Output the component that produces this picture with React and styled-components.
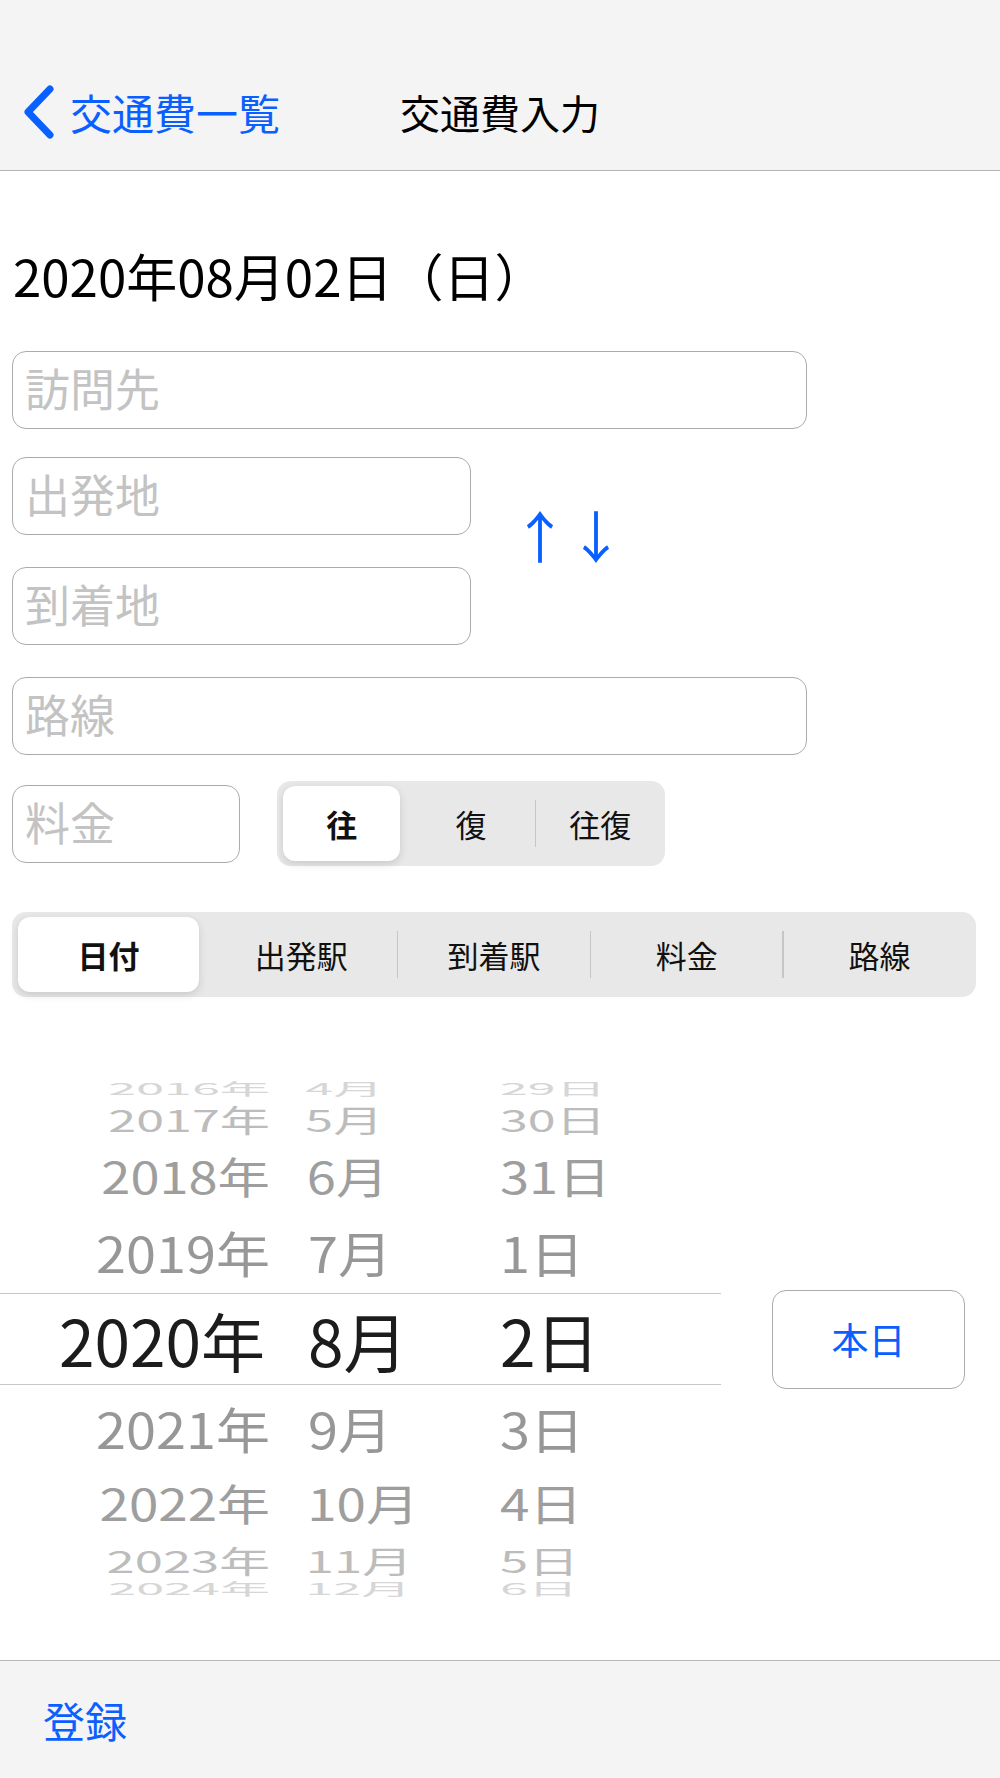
import React from 'react'
import styled, { createGlobalStyle } from 'styled-components'

const BLUE = '#0a60fe'

const GlobalStyle = createGlobalStyle`
  html, body {
    margin: 0;
    padding: 0;
    background: #fff;
  }
  body {
    font-family: "Noto Sans CJK JP", "Noto Sans", sans-serif;
    color: #000;
  }
  * {
    box-sizing: border-box;
  }
`

const Screen = styled.div`
  width: 1000px;
  min-height: 1778px;
  display: flex;
  flex-direction: column;
  background: #fff;
`

const NavBar = styled.header`
  height: 171px;
  padding-top: 54px;
  background: #f4f4f4;
  border-bottom: 1px solid #b4b4b4;
  display: grid;
  grid-template-columns: 1fr auto 1fr;
  align-items: center;
`

const BackButton = styled.a`
  display: flex;
  align-items: center;
  gap: 15px;
  padding-left: 23px;
  color: ${BLUE};
  font-size: 42px;
  text-decoration: none;
  line-height: 1;
`

const NavTitle = styled.h1`
  margin: 0;
  font-size: 40px;
  font-weight: 400;
  line-height: 1;
`

const Main = styled.main`
  flex: 1;
  display: flex;
  flex-direction: column;
`

const FormArea = styled.section`
  padding: 0 12px;
  display: flex;
  flex-direction: column;
`

const DateLabel = styled.div`
  margin-top: 75px;
  padding-left: 1px;
  font-size: 51px;
  line-height: 58px;
`

const Fields = styled.div`
  margin-top: 47px;
  display: flex;
  flex-direction: column;
  gap: 32px;
`

const TextField = styled.input`
  width: ${(p) => p.$width}px;
  height: 78px;
  padding: 0 12px 5px;
  border: 1.5px solid #ababab;
  border-radius: 14px;
  background: #fff;
  font-family: inherit;
  font-size: 45px;
  color: #000;
  outline: none;
  &::placeholder {
    color: #c3c3c3;
  }
`

const RouteRow = styled.div`
  margin-top: -4px;
  display: flex;
  align-items: center;
`

const RouteStack = styled.div`
  display: flex;
  flex-direction: column;
  gap: 32px;
`

const SwapButton = styled.button`
  margin: 0 0 34px 41px;
  padding: 0;
  border: none;
  background: none;
  color: ${BLUE};
  font-family: inherit;
  font-size: 56px;
  line-height: 1;
`

const FareRow = styled.div`
  margin-top: -6px;
  display: flex;
  align-items: center;
  gap: 37px;
`

const Segmented = styled.div`
  width: ${(p) => p.$width}px;
  height: 85px;
  margin-top: ${(p) => p.$top || 0}px;
  background: #e8e8e8;
  border-radius: 14px;
  display: flex;
  align-items: center;
`

const Segment = styled.div`
  flex: 1;
  height: 100%;
  padding: 5px 6px;
  display: flex;
`

const SegLabel = styled.span`
  flex: 1;
  display: flex;
  align-items: center;
  justify-content: center;
  font-size: 31px;
  color: #111;
  border-radius: 12px;
  font-weight: ${(p) => (p.$active ? 700 : 400)};
  background: ${(p) => (p.$active ? '#fff' : 'transparent')};
  box-shadow: ${(p) =>
    p.$active ? '0 3px 8px rgba(0,0,0,0.13), 0 0 1px rgba(0,0,0,0.06)' : 'none'};
`

const SegDivider = styled.span`
  width: 1.5px;
  height: 47px;
  margin: 0 -0.75px;
  flex: none;
  background: ${(p) => (p.$hidden ? 'transparent' : '#c6c6c6')};
`

const PickerArea = styled.div`
  margin-top: 82px;
  display: flex;
  align-items: center;
`

const Picker = styled.div`
  width: 721px;
  display: flex;
  flex-direction: column;
`

const PickerRow = styled.div`
  height: ${(p) => p.$h}px;
  display: grid;
  grid-template-columns: 270px 230px 1fr;
  color: ${(p) => p.$color};
  font-size: ${(p) => p.$size}px;
  line-height: ${(p) => p.$h - (p.$selected ? 2 : 0)}px;
  border-top: ${(p) => (p.$selected ? '1px solid #c8c8c8' : 'none')};
  border-bottom: ${(p) => (p.$selected ? '1px solid #c8c8c8' : 'none')};
`

const PickerCell = styled.span`
  display: block;
  white-space: nowrap;
  text-align: ${(p) => (p.$right ? 'right' : 'left')};
  padding-left: ${(p) => p.$pl || 0}px;
  padding-right: ${(p) => p.$pr || 0}px;
  transform-origin: ${(p) => (p.$right ? 'right center' : 'left center')};
  transform: scale(${(p) => p.$sx}, ${(p) => p.$sy});
`

const TodayButton = styled.button`
  margin: 8px 0 0 51px;
  width: 193px;
  height: 99px;
  border: 1.5px solid #ababab;
  border-radius: 14px;
  background: #fff;
  color: ${BLUE};
  font-family: inherit;
  font-size: 37px;
`

const Toolbar = styled.footer`
  height: 118px;
  border-top: 1px solid #b8b8b8;
  background: #f4f4f4;
  display: flex;
  align-items: center;
  padding-left: 43px;
  color: ${BLUE};
  font-size: 42px;
`

const Chevron = () => (
  <svg width="32" height="54" viewBox="0 0 32 54">
    <path
      d="M27 4 L5 27 L27 50"
      fill="none"
      stroke={BLUE}
      strokeWidth="7"
      strokeLinecap="round"
      strokeLinejoin="round"
    />
  </svg>
)

const wheel = [
  { y: '2016年', m: '4月', d: '29日', h: 18, sy: 0.3, sx: 0.93, color: '#d6d6d6' },
  { y: '2017年', m: '5月', d: '30日', h: 44, sy: 0.56, sx: 0.93, color: '#bcbcbc' },
  { y: '2018年', m: '6月', d: '31日', h: 70, sy: 0.8, sx: 0.97, color: '#9e9e9e' },
  { y: '2019年', m: '7月', d: '1日', h: 82, sy: 0.9, sx: 1, color: '#979797' },
  { y: '2020年', m: '8月', d: '2日', h: 92, sy: 1, sx: 1, color: '#1c1c1c', selected: true },
  { y: '2021年', m: '9月', d: '3日', h: 86, sy: 0.9, sx: 1, color: '#979797' },
  { y: '2022年', m: '10月', d: '4日', h: 64, sy: 0.8, sx: 0.98, color: '#9e9e9e' },
  { y: '2023年', m: '11月', d: '5日', h: 50, sy: 0.56, sx: 0.94, color: '#bcbcbc' },
  { y: '2024年', m: '12月', d: '6日', h: 6, sy: 0.3, sx: 0.93, color: '#d6d6d6' },
]

const directions = ['往', '復', '往復']
const sortKeys = ['日付', '出発駅', '到着駅', '料金', '路線']

const SegmentGroup = ({ items, active, width, top }) => (
  <Segmented $width={width} $top={top}>
    {items.map((label, i) => (
      <React.Fragment key={label}>
        {i > 0 && <SegDivider $hidden={i === active || i - 1 === active} />}
        <Segment>
          <SegLabel $active={i === active}>{label}</SegLabel>
        </Segment>
      </React.Fragment>
    ))}
  </Segmented>
)

export default function App() {
  return (
    <Screen>
      <GlobalStyle />
      <NavBar>
        <BackButton href="#">
          <Chevron />
          交通費一覧
        </BackButton>
        <NavTitle>交通費入力</NavTitle>
        <div />
      </NavBar>

      <Main>
        <FormArea>
          <DateLabel>2020年08月02日（日）</DateLabel>
          <Fields>
            <TextField $width={795} placeholder="訪問先" />
            <RouteRow>
              <RouteStack>
                <TextField $width={459} placeholder="出発地" />
                <TextField $width={459} placeholder="到着地" />
              </RouteStack>
              <SwapButton>↑↓</SwapButton>
            </RouteRow>
            <TextField $width={795} placeholder="路線" />
            <FareRow>
              <TextField $width={228} placeholder="料金" />
              <SegmentGroup items={directions} active={0} width={388} />
            </FareRow>
          </Fields>
          <SegmentGroup items={sortKeys} active={0} width={964} top={46} />
        </FormArea>

        <PickerArea>
          <Picker>
            {wheel.map((r) => (
              <PickerRow
                key={r.y}
                $h={r.h}
                $color={r.color}
                $size={r.selected ? 64 : 54}
                $selected={r.selected}
              >
                <PickerCell $right $pr={r.selected ? 5 : 0} $sx={r.sx} $sy={r.sy}>
                  {r.y}
                </PickerCell>
                <PickerCell $pl={38} $sx={r.sx} $sy={r.sy}>{r.m}</PickerCell>
                <PickerCell $sx={r.sx} $sy={r.sy}>{r.d}</PickerCell>
              </PickerRow>
            ))}
          </Picker>
          <TodayButton>本日</TodayButton>
        </PickerArea>
      </Main>

      <Toolbar>登録</Toolbar>
    </Screen>
  )
}
